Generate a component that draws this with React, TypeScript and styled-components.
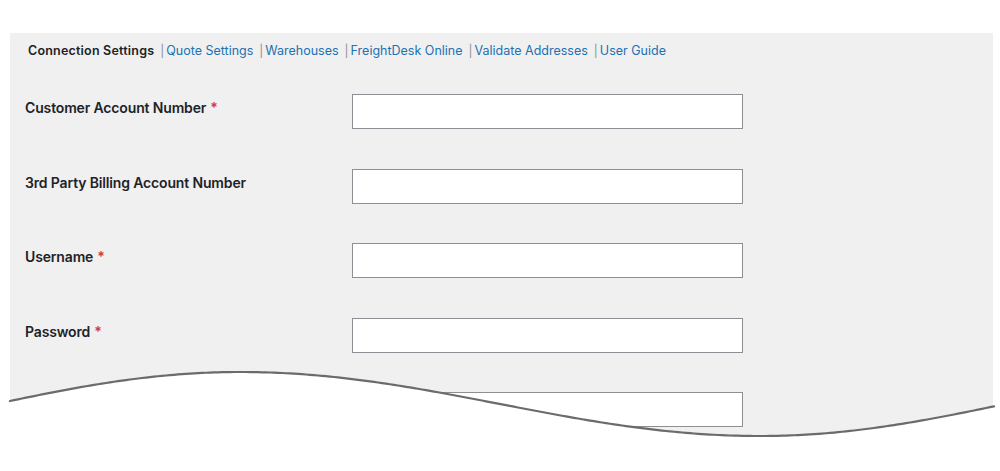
import styled, { createGlobalStyle } from 'styled-components';

const GlobalStyle = createGlobalStyle`
  html, body {
    margin: 0;
    padding: 0;
    background: #ffffff;
  }
  body {
    font-family: Inter, "Open Sans", "Liberation Sans", sans-serif;
    -webkit-font-smoothing: antialiased;
  }
`;

const tabs = [
  { label: 'Connection Settings', active: true },
  { label: 'Quote Settings' },
  { label: 'Warehouses' },
  { label: 'FreightDesk Online' },
  { label: 'Validate Addresses' },
  { label: 'User Guide' },
];

const fields = [
  { label: 'Customer Account Number', required: true },
  { label: '3rd Party Billing Account Number' },
  { label: 'Username', required: true },
  { label: 'Password', required: true },
  { label: 'Access Key', required: true },
];

// Torn-edge wave: crest at x=240, trough at x=760, flatter tails at both ends.
const waveY = (x: number) => {
  if (x < 240) return 372 + 35.4 * (1 - Math.cos((Math.PI * (240 - x)) / 520));
  if (x > 760) return 436 - 35.2 * (1 - Math.cos((Math.PI * (x - 760)) / 520));
  return 404 - 32 * Math.cos((Math.PI * (x - 240)) / 520);
};
const wavePoints = (from: number, to: number) => {
  const pts: string[] = [];
  for (let x = from; x <= to; x += 4) pts.push(`${x} ${waveY(x).toFixed(2)}`);
  return pts;
};
const strokePath = 'M ' + wavePoints(10, 994).join(' L ');
const fillPath = 'M ' + wavePoints(0, 1000).join(' L ') + ' L 1000 471 L 0 471 Z';

const Page = styled.div`
  position: relative;
  width: 1000px;
  height: 471px;
  overflow: hidden;
  padding: 33px 7px 0 10px;
  box-sizing: border-box;
`;

const Panel = styled.div`
  background: #f0f0f1;
  height: 100%;
`;

const Nav = styled.nav`
  display: flex;
  align-items: center;
  padding: 9px 0 0 18px;
  height: 18px;
  font-size: 12.5px;
  line-height: 18px;
`;

const Tab = styled.a<{ $active?: boolean }>`
  color: ${({ $active }) => ($active ? '#1d2327' : '#2271b1')};
  font-weight: ${({ $active }) => ($active ? 600 : 400)};
  letter-spacing: ${({ $active }) => ($active ? '0.2px' : '0')};
  text-decoration: none;
  white-space: nowrap;
`;

const Sep = styled.span`
  color: #8c8f94;
  margin: 0 2px 0 6px;
  font-size: 12px;
`;

const Form = styled.div`
  display: flex;
  flex-direction: column;
  gap: 39.5px;
  padding: 34px 0 0 15px;
`;

const Row = styled.div`
  display: grid;
  grid-template-columns: 327px 391px;
  align-items: start;
`;

const Label = styled.label`
  padding-top: 4px;
  font-size: 14px;
  line-height: 20px;
  font-weight: 600;
  letter-spacing: -0.15px;
  color: #1d2327;
`;

const Req = styled.span`
  color: #d63638;
  margin-left: 4px;
`;

const Input = styled.input`
  box-sizing: border-box;
  width: 391px;
  height: 35px;
  margin: 0;
  padding: 0 8px;
  background: #ffffff;
  border: 1px solid #8c8f94;
  border-radius: 0;
  font: inherit;
  font-size: 14px;
  outline: none;
`;

const Tear = styled.svg`
  position: absolute;
  left: 0;
  top: 0;
  width: 1000px;
  height: 471px;
  pointer-events: none;
`;

export default function App() {
  return (
    <>
      <GlobalStyle />
      <Page>
        <Panel>
          <Nav>
            {tabs.map((t, i) => (
              <span key={t.label}>
                {i > 0 && <Sep>|</Sep>}
                <Tab href="#" $active={t.active}>
                  {t.label}
                </Tab>
              </span>
            ))}
          </Nav>
          <Form>
            {fields.map((f) => (
              <Row key={f.label}>
                <Label>
                  {f.label}
                  {f.required && <Req>*</Req>}
                </Label>
                <Input type="text" aria-label={f.label} />
              </Row>
            ))}
          </Form>
        </Panel>
        <Tear viewBox="0 0 1000 471">
          <path d={fillPath} fill="#ffffff" />
          <path d={strokePath} fill="none" stroke="#6b6b6b" strokeWidth={2.2} strokeLinecap="round" />
        </Tear>
      </Page>
    </>
  );
}
